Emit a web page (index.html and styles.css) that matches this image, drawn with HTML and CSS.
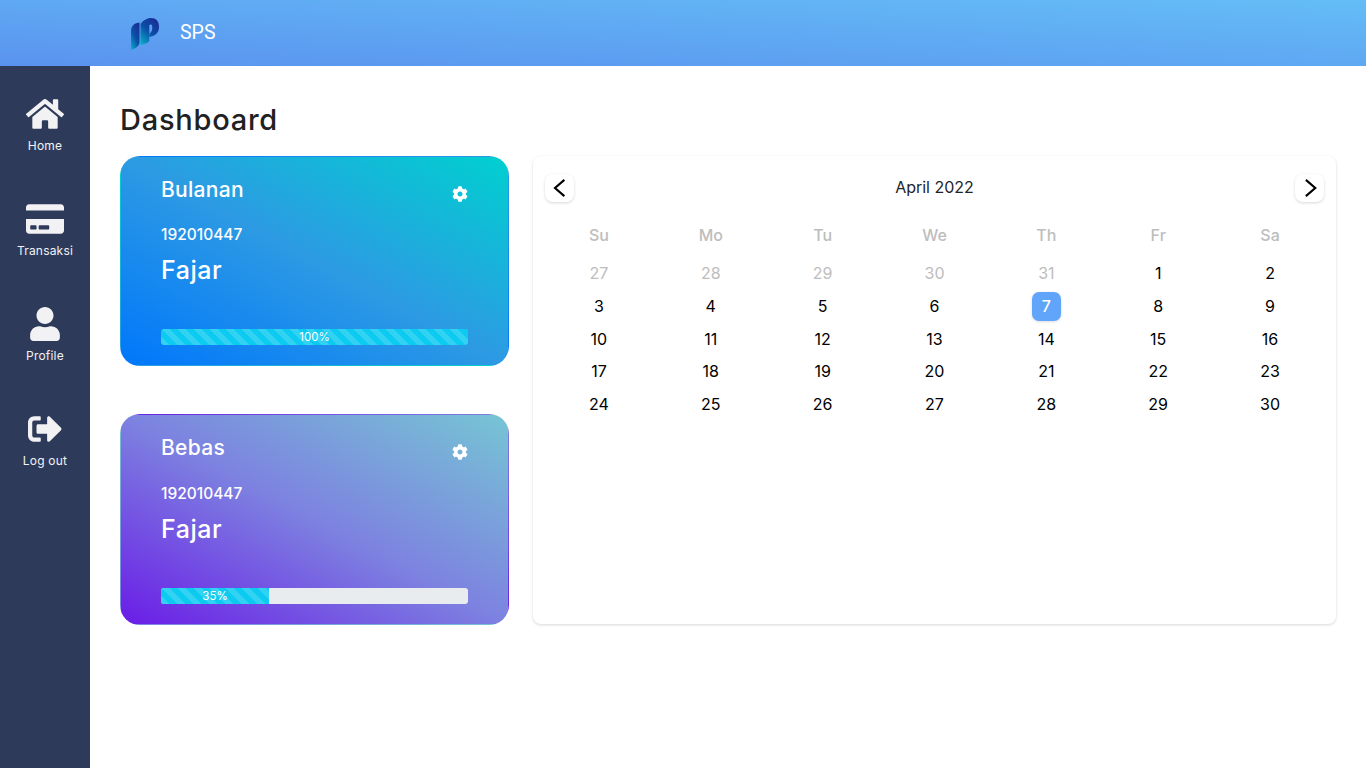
FILE: index.html
```html
<!DOCTYPE html>
<html lang="id">
<head>
<meta charset="utf-8">
<title>SPS Dashboard</title>
<link rel="stylesheet" href="styles.css">
</head>
<body>
<header class="topbar">
  <svg class="logo" viewBox="0 0 30 32" width="30" height="32">
    <defs>
      <linearGradient id="lg" x1="0" y1="1" x2="0.7" y2="0">
        <stop offset="0" stop-color="#06b5c9"/>
        <stop offset="0.55" stop-color="#0b4fa8"/>
        <stop offset="1" stop-color="#1a2f96"/>
      </linearGradient>
    </defs>
    <path fill="url(#lg)" d="M1 13C1 9 3 6 7 5L9.500 4.500V24C9.500 28 6 30 1 32Z"/>
    <path fill="url(#lg)" d="M10.500 6C13 2.500 17 0 21 0C26 0 29 3 29 9C29 15 25 18 19.500 19V15.500C21 15 22.300 12.500 22.300 9.500C22.300 7.500 21.800 6.500 20.800 6.500C19.800 6.500 19.300 7 19.300 8V22.500C19.300 24 15 26.500 10.500 27Z"/>
  </svg>
  <span class="brand">SPS</span>
</header>
<div class="shell">
  <nav class="sidebar">
    <a class="nav-item">
      <svg class="nav-icon" viewBox="0 0 576 512"><path d="M280.37 148.26L96 300.11V464a16 16 0 0 0 16 16l112.06-.29a16 16 0 0 0 15.92-16V368a16 16 0 0 1 16-16h64a16 16 0 0 1 16 16v95.64a16 16 0 0 0 16 16.05L464 480a16 16 0 0 0 16-16V300L295.67 148.26a12.19 12.19 0 0 0-15.3 0zM571.6 251.47L488 182.56V44.05a12 12 0 0 0-12-12h-56a12 12 0 0 0-12 12v72.61L318.47 43a48 48 0 0 0-61 0L4.34 251.47a12 12 0 0 0-1.6 16.9l25.5 31A12 12 0 0 0 45.15 301l235.22-193.74a12.19 12.19 0 0 1 15.3 0L530.9 301a12 12 0 0 0 16.9-1.6l25.5-31a12 12 0 0 0-1.7-16.93z"/></svg>
      <span>Home</span>
    </a>
    <a class="nav-item">
      <svg class="nav-icon" viewBox="0 0 576 512"><path d="M0 432c0 26.500 21.500 48 48 48h480c26.500 0 48-21.500 48-48V256H0v176zm192-68c0-6.600 5.400-12 12-12h136c6.600 0 12 5.400 12 12v40c0 6.600-5.400 12-12 12H204c-6.600 0-12-5.400-12-12v-40zm-128 0c0-6.600 5.400-12 12-12h72c6.600 0 12 5.400 12 12v40c0 6.600-5.400 12-12 12H76c-6.600 0-12-5.400-12-12v-40zM576 80v48H0V80c0-26.500 21.500-48 48-48h480c26.500 0 48 21.500 48 48z"/></svg>
      <span>Transaksi</span>
    </a>
    <a class="nav-item">
      <svg class="nav-icon" viewBox="0 0 448 512"><path d="M224 256c70.700 0 128-57.300 128-128S294.700 0 224 0 96 57.300 96 128s57.300 128 128 128zm89.600 32h-16.700c-22.200 10.200-46.900 16-72.900 16s-50.600-5.800-72.900-16h-16.700C60.200 288 0 348.200 0 422.400V464c0 26.500 21.500 48 48 48h352c26.500 0 48-21.500 48-48v-41.600c0-74.200-60.200-134.400-134.400-134.400z"/></svg>
      <span>Profile</span>
    </a>
    <a class="nav-item">
      <svg class="nav-icon" viewBox="0 0 512 512"><path d="M497 273L329 441c-15 15-41 4.500-41-17v-96H152c-13.300 0-24-10.700-24-24v-96c0-13.300 10.700-24 24-24h136V88c0-21.400 25.900-32 41-17l168 168c9.300 9.400 9.300 24.600 0 34zM192 436v-40c0-6.600-5.400-12-12-12H96c-17.700 0-32-14.300-32-32V160c0-17.700 14.300-32 32-32h84c6.600 0 12-5.400 12-12V76c0-6.600-5.400-12-12-12H96c-53 0-96 43-96 96v192c0 53 43 96 96 96h84c6.600 0 12-5.400 12-12z"/></svg>
      <span>Log out</span>
    </a>
  </nav>
  <main class="content">
    <h1 class="page-title">Dashboard</h1>
    <div class="panels">
      <div class="cards">
        <section class="plan plan-blue">
          <div class="plan-head">
            <h2 class="plan-name">Bulanan</h2>
            <svg class="cog" viewBox="0 0 512 512"><path d="M487.400 315.700l-42.600-24.600c4.300-23.200 4.300-47 0-70.200l42.600-24.600c4.900-2.800 7.100-8.600 5.500-14-11.100-35.600-30-67.800-54.700-94.600-3.800-4.100-10-5.100-14.800-2.300L380.800 110c-17.900-15.400-38.500-27.300-60.800-35.100V25.800c0-5.600-3.900-10.500-9.400-11.700-36.700-8.200-74.300-7.800-109.200 0-5.500 1.200-9.400 6.100-9.400 11.700V75c-22.200 7.900-42.800 19.800-60.800 35.100L88.700 85.500c-4.900-2.800-11-1.900-14.800 2.300-24.700 26.700-43.600 58.900-54.700 94.600-1.700 5.400.6 11.200 5.500 14L67.300 221c-4.300 23.200-4.300 47 0 70.200l-42.600 24.600c-4.900 2.800-7.100 8.600-5.500 14 11.100 35.600 30 67.800 54.700 94.600 3.800 4.100 10 5.100 14.800 2.300l42.600-24.600c17.900 15.400 38.500 27.300 60.800 35.100v49.200c0 5.600 3.900 10.500 9.400 11.700 36.700 8.200 74.300 7.800 109.200 0 5.500-1.200 9.400-6.100 9.400-11.700v-49.200c22.200-7.900 42.800-19.800 60.800-35.100l42.600 24.600c4.900 2.800 11 1.900 14.800-2.300 24.700-26.700 43.600-58.900 54.700-94.600 1.500-5.500-.7-11.300-5.600-14.100zM256 336c-44.100 0-80-35.900-80-80s35.900-80 80-80 80 35.900 80 80-35.900 80-80 80z"/></svg>
          </div>
          <p class="plan-id">192010447</p>
          <p class="plan-user">Fajar</p>
          <div class="progress"><div class="progress-fill fill-100">100%</div></div>
        </section>
        <section class="plan plan-purple">
          <div class="plan-head">
            <h2 class="plan-name">Bebas</h2>
            <svg class="cog" viewBox="0 0 512 512"><path d="M487.400 315.700l-42.600-24.600c4.300-23.200 4.300-47 0-70.200l42.600-24.600c4.900-2.800 7.100-8.600 5.500-14-11.100-35.600-30-67.800-54.700-94.600-3.800-4.100-10-5.100-14.800-2.300L380.800 110c-17.900-15.400-38.500-27.300-60.800-35.100V25.800c0-5.600-3.900-10.500-9.400-11.700-36.700-8.200-74.300-7.800-109.200 0-5.500 1.200-9.400 6.100-9.400 11.700V75c-22.200 7.900-42.800 19.800-60.800 35.100L88.700 85.500c-4.900-2.800-11-1.900-14.800 2.300-24.700 26.700-43.600 58.900-54.700 94.600-1.700 5.400.6 11.200 5.500 14L67.300 221c-4.300 23.200-4.300 47 0 70.200l-42.600 24.600c-4.900 2.800-7.100 8.600-5.500 14 11.100 35.600 30 67.800 54.700 94.600 3.800 4.100 10 5.100 14.800 2.300l42.600-24.600c17.900 15.400 38.500 27.300 60.800 35.100v49.200c0 5.600 3.900 10.500 9.400 11.700 36.700 8.200 74.300 7.800 109.200 0 5.500-1.200 9.400-6.100 9.400-11.700v-49.200c22.200-7.900 42.800-19.800 60.800-35.100l42.600 24.600c4.900 2.800 11 1.900 14.800-2.300 24.700-26.700 43.600-58.900 54.700-94.600 1.500-5.500-.7-11.300-5.600-14.100zM256 336c-44.100 0-80-35.900-80-80s35.900-80 80-80 80 35.900 80 80-35.900 80-80 80z"/></svg>
          </div>
          <p class="plan-id">192010447</p>
          <p class="plan-user">Fajar</p>
          <div class="progress"><div class="progress-fill fill-35">35%</div></div>
        </section>
      </div>
      <section class="calendar">
        <div class="cal-head">
          <button class="cal-nav"><svg viewBox="0 0 16 16" width="20" height="20"><path d="M11.500 1.500L4 8l7.500 6.500" fill="none" stroke="#000" stroke-width="1.700"/></svg></button>
          <span class="cal-month">April 2022</span>
          <button class="cal-nav"><svg viewBox="0 0 16 16" width="20" height="20"><path d="M5.500 1.500L13 8l-7.500 6.500" fill="none" stroke="#000" stroke-width="1.700"/></svg></button>
        </div>
        <div class="cal-weekdays">
          <span>Su</span><span>Mo</span><span>Tu</span><span>We</span><span>Th</span><span>Fr</span><span>Sa</span>
        </div>
        <div class="cal-days">
          <span class="muted">27</span><span class="muted">28</span><span class="muted">29</span><span class="muted">30</span><span class="muted">31</span><span>1</span><span>2</span>
          <span>3</span><span>4</span><span>5</span><span>6</span><span class="today">7</span><span>8</span><span>9</span>
          <span>10</span><span>11</span><span>12</span><span>13</span><span>14</span><span>15</span><span>16</span>
          <span>17</span><span>18</span><span>19</span><span>20</span><span>21</span><span>22</span><span>23</span>
          <span>24</span><span>25</span><span>26</span><span>27</span><span>28</span><span>29</span><span>30</span>
        </div>
      </section>
    </div>
  </main>
</div>
</body>
</html>
```

FILE: styles.css
```css
* { box-sizing: border-box; }
html, body { margin: 0; height: 100%; }
body {
  font-family: Inter, "Noto Sans", "Liberation Sans", sans-serif;
  background: #fff;
  color: #212529;
  overflow: hidden;
}
.topbar {
  height: 66px;
  display: flex;
  align-items: center;
  padding: 0 0 2px 130px;
  background: linear-gradient(to top right, #5a93ef 0%, #64bdf6 100%);
}
.logo { margin-top: 4px; }
.brand {
  margin-left: 20px;
  font-family: Roboto, sans-serif;
  font-size: 19.500px;
  color: #fff;
}
.shell { display: flex; height: 702px; }
.sidebar {
  width: 90px;
  flex: none;
  background: #2d3a5a;
  padding-top: 31px;
  display: flex;
  flex-direction: column;
  gap: 35px;
}
.nav-item {
  height: 70px;
  display: flex;
  flex-direction: column;
  align-items: center;
  color: #f2f2f4;
  font-size: 12px;
  line-height: 18px;
  font-weight: 400;
  letter-spacing: 0.2px;
}
.nav-icon { width: 38px; height: 34px; fill: #f2f2f4; margin-bottom: 6px; }
.content { flex: 1; padding: 36px 30px 0; }
.page-title {
  margin: 0 0 19px;
  font-size: 29px;
  line-height: 35px;
  font-weight: 500;
  letter-spacing: 0.75px;
  color: #212121;
}
.panels { display: flex; gap: 24px; align-items: stretch; }
.cards { width: 389px; flex: none; display: flex; flex-direction: column; gap: 48.200px; }
.plan {
  height: 210.300px;
  border: 1px solid transparent;
  border-radius: 20px;
  padding: 19px 40px 0;
  color: #fff;
  display: flex;
  flex-direction: column;
}
.plan-blue {
  background: linear-gradient(to top right, #0077fb 0%, #2d9ae3 50%, #00d0cf 100%);
}
.plan-purple {
  background: linear-gradient(to top right, #6a1de6 0%, #7d82e0 50%, #76c5d4 100%);
}
.plan-head { display: flex; justify-content: space-between; align-items: flex-start; height: 49.300px; }
.plan-name { margin: 0; font-size: 21px; line-height: 28px; font-weight: 500; letter-spacing: 0.3px; }
.cog { width: 16px; height: 16px; fill: #fff; margin-top: 10px; }
.plan-id { margin: 0; font-size: 15.500px; line-height: 20px; font-weight: 500; }
.plan-user { margin: 7px 0 0; font-size: 25px; line-height: 36px; font-weight: 500; letter-spacing: 0.5px; }
.progress {
  margin-top: auto;
  margin-bottom: 20px;
  height: 16px;
  border-radius: 3px;
  background: #e9ecef;
  overflow: hidden;
  font-size: 11.500px;
}
.progress-fill {
  height: 100%;
  color: #fff;
  text-align: center;
  line-height: 16px;
  background-color: #0dcaf0;
  background-image: linear-gradient(45deg, rgba(255,255,255,.15) 25%, transparent 25%, transparent 50%, rgba(255,255,255,.15) 50%, rgba(255,255,255,.15) 75%, transparent 75%, transparent);
  background-size: 16px 16px;
}
.fill-100 { width: 100%; }
.fill-35 { width: 35.200%; }
.calendar {
  flex: 1;
  height: 468px;
  border-radius: 8px;
  background: #fff;
  box-shadow: 0 1px 3px rgba(0,0,0,.16);
  padding: 18px 10px 0;
}
.cal-head { display: flex; justify-content: space-between; align-items: center; height: 28px; margin: 0 2px; }
.cal-nav {
  width: 29px;
  height: 28px;
  padding: 0;
  border: 0;
  border-radius: 8px;
  background: #fff;
  box-shadow: 0 1px 3px rgba(0,0,0,.16);
  display: flex;
  align-items: center;
  justify-content: center;
}
.cal-month { font-size: 16px; font-weight: 400; color: #212529; margin-top: -2px; }
.cal-weekdays, .cal-days { display: grid; grid-template-columns: repeat(7, 1fr); text-align: center; }
.cal-weekdays { margin-top: 14px; height: 41px; line-height: 38px; font-size: 16px; font-weight: 500; color: #bdbdbd; }
.cal-days { grid-auto-rows: 32.800px; font-size: 16px; line-height: 32.800px; color: #000; justify-items: center; align-items: center; }
.muted { color: #bdbdbd; }
.today {
  width: 29px;
  height: 29px;
  line-height: 29px;
  border-radius: 7px;
  background: #60a5fa;
  box-shadow: 0 1px 3px rgba(0,0,0,.14);
  color: #fff;
  font-weight: 500;
}
```
